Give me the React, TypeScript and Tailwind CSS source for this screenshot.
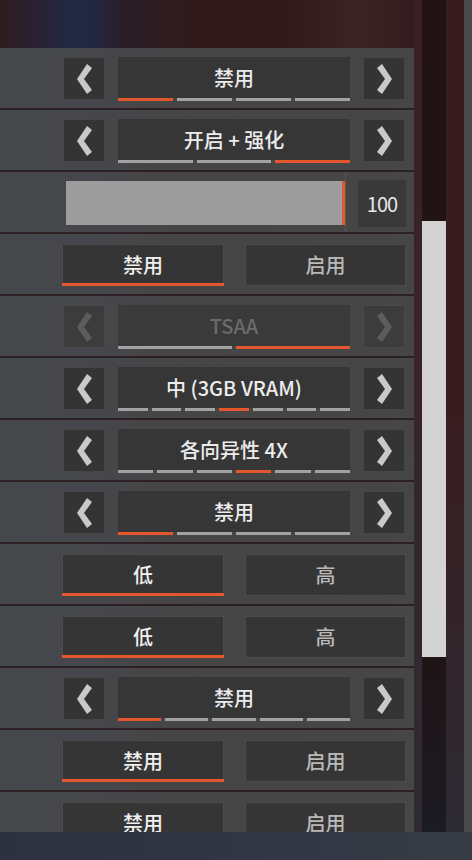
type Row =
  | { kind: "sel"; label: string; n: number; active: number; disabled?: boolean }
  | { kind: "slider"; value: number }
  | { kind: "toggle"; a: string; b: string };

const rows: Row[] = [
  { kind: "sel", label: "禁用", n: 4, active: 0 },
  { kind: "sel", label: "开启 + 强化", n: 3, active: 2 },
  { kind: "slider", value: 100 },
  { kind: "toggle", a: "禁用", b: "启用" },
  { kind: "sel", label: "TSAA", n: 2, active: 1, disabled: true },
  { kind: "sel", label: "中 (3GB VRAM)", n: 7, active: 3 },
  { kind: "sel", label: "各向异性 4X", n: 6, active: 3 },
  { kind: "sel", label: "禁用", n: 4, active: 0 },
  { kind: "toggle", a: "低", b: "高" },
  { kind: "toggle", a: "低", b: "高" },
  { kind: "sel", label: "禁用", n: 5, active: 0 },
  { kind: "toggle", a: "禁用", b: "启用" },
  { kind: "toggle", a: "禁用", b: "启用" },
];

function Chevron({ dir, dim }: { dir: "left" | "right"; dim?: boolean }) {
  const pts = dir === "left" ? "10,0 15,4 7,15 15,26 10,30 0,15" : "5,0 0,4 8,15 0,26 5,30 15,15";
  return (
    <svg width="15" height="30" viewBox="0 0 15 30">
      <polygon points={pts} fill={dim ? "#5c5c5d" : "#c9c9c9"} />
    </svg>
  );
}

function ArrowBtn({ dir, dim }: { dir: "left" | "right"; dim?: boolean }) {
  return (
    <div
      className={
        dim
          ? "w-[42px] h-[43px] flex items-center justify-center border border-[#4a4a4b] bg-[#3c3c3d]"
          : "w-[42px] h-[43px] flex items-center justify-center border border-[#464647] bg-[#343435]"
      }
    >
      <Chevron dir={dir} dim={dim} />
    </div>
  );
}

function Selector({ label, n, active, disabled }: { label: string; n: number; active: number; disabled?: boolean }) {
  return (
    <div className="flex gap-[13px] pl-[63px] pt-[9px]">
      <ArrowBtn dir="left" dim={disabled} />
      <div className="w-[232px] flex flex-col">
        <div
          className={
            disabled
              ? "h-[41px] bg-[#3a3a3b] flex items-center justify-center text-[20px] font-medium text-[#6b6b6c]"
              : "h-[41px] bg-[#363637] flex items-center justify-center text-[20px] font-medium text-[#ececec]"
          }
        >
          {label}
        </div>
        <div className="flex gap-[4px] h-[3px]">
          {Array.from({ length: n }).map((_, i) => (
            <div key={i} className={i === active ? "flex-1 bg-[#e4572e]" : "flex-1 bg-[#a2a2a2]"} />
          ))}
        </div>
      </div>
      <ArrowBtn dir="right" dim={disabled} />
    </div>
  );
}

function Toggle({ a, b }: { a: string; b: string }) {
  return (
    <div className="flex gap-[21px] pl-[62px] pt-[10px]">
      <div className="relative w-[162px] h-[42px] border border-[#4b4b4c] bg-[#353536] flex items-center justify-center text-[20px] font-medium text-[#f0f0f0]">
        {a}
        <div className="absolute left-[-1px] right-[-1px] bottom-[-1px] h-[3px] bg-[#e4572e]" />
      </div>
      <div className="w-[161px] h-[42px] border border-[#4b4b4c] bg-[#353536] flex items-center justify-center text-[20px] font-medium text-[#b9b9b9]">
        {b}
      </div>
    </div>
  );
}

function Slider({ value }: { value: number }) {
  return (
    <div className="flex h-full pl-[66px]">
      <div className="pt-[9px]">
        <div className="w-[279px] h-[44px] bg-[#9c9c9c] border-r-[3px] border-[#e4572e]" />
      </div>
      <div className="w-px h-full bg-[#575758]" />
      <div className="pl-[12px] pt-[8px]">
        <div className="w-[48px] h-[47px] bg-[#39393a] flex items-center justify-center text-[20px] text-[#e8e8e8] tracking-[-1px]">
          {value}
        </div>
      </div>
    </div>
  );
}

export default function App() {
  return (
    <div
      className="w-[472px] h-[860px] flex flex-col overflow-hidden bg-[#2f1b1e]"
      style={{ fontFamily: '"Noto Sans CJK SC", "Noto Sans", sans-serif' }}
    >
      <div className="flex flex-1 min-h-0">
        <div className="w-[414px] flex flex-col min-h-0 overflow-hidden">
          <div className="h-[48px] shrink-0 bg-[linear-gradient(90deg,#2e1c20_0%,#2a2134_9%,#1f2a45_18%,#222841_22%,#2a1d27_30%,#311a1c_45%,#311a1b_70%,#3a2325_86%,#321c1e_100%)]" />
          {rows.map((r, i) => (
            <div
              key={i}
              className="h-[62px] shrink-0 border-b-2 border-[#2d2023] bg-[linear-gradient(90deg,#45474b_0%,#46474c_20%,#454546_45%,#464646_100%)]"
            >
              {r.kind === "sel" && <Selector label={r.label} n={r.n} active={r.active} disabled={r.disabled} />}
              {r.kind === "toggle" && <Toggle a={r.a} b={r.b} />}
              {r.kind === "slider" && <Slider value={r.value} />}
            </div>
          ))}
        </div>
        <div className="w-[8px] bg-gradient-to-b from-[#3b2024] to-[#302a33]" />
        <div className="w-[24px] flex flex-col">
          <div className="h-[221px] bg-[#211313]" />
          <div className="h-[436px] bg-[#d3d3d3]" />
          <div className="flex-1 bg-gradient-to-b from-[#1f1416] to-[#1b1b22]" />
        </div>
        <div className="w-[18px] bg-gradient-to-b from-[#371d20] via-[#381d20] to-[#2c2a33]" />
        <div className="w-[8px] bg-[#4a4a4b]" />
      </div>
      <div className="h-[28px] bg-gradient-to-r from-[#2d3140] to-[#373b46]" />
    </div>
  );
}
